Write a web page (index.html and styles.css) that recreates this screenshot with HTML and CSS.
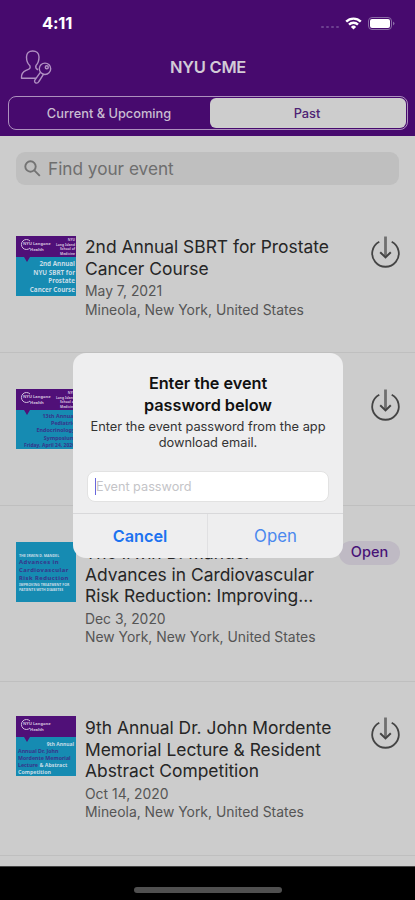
FILE: index.html
```html
<!DOCTYPE html>
<html lang="en">
<head>
<meta charset="utf-8">
<title>NYU CME</title>
<link rel="stylesheet" href="styles.css">
</head>
<body>
<svg class="defs" width="0" height="0">
  <symbol id="download" viewBox="0 0 32 34">
    <path d="M10.300 5.700A13.300 13.300 0 1 0 22.700 5.700" fill="none" stroke="#444" stroke-width="1.800"/>
    <path d="M16.500 .5v20" fill="none" stroke="#707070" stroke-width="2.800"/>
    <path d="M11.200 16.200l5.300 5.200 5.300-5.200" fill="none" stroke="#444" stroke-width="2"/>
  </symbol>
  <symbol id="crest" viewBox="0 0 30 14">
    <path d="M11 3A5 5 0 1 0 11 10" fill="none" stroke="currentColor" stroke-width="1"/>
  </symbol>
</svg>
<div class="phone">
  <header class="top">
    <div class="status">
      <span class="time">4:11</span>
      <span class="signals">
        <span class="dots"><i></i><i></i><i></i><i></i></span>
        <svg width="17" height="13" viewBox="0 0 17 13" fill="none" stroke="#fff" stroke-width="2.4"><path d="M1.2 4.7a10.3 10.3 0 0 1 14.6 0M4 7.6a6.4 6.4 0 0 1 9 0"/><path d="M8.5 12.5L5.9 9.9a3.7 3.7 0 0 1 5.2 0z" fill="#fff" stroke="none"/></svg>
        <svg width="27" height="13" viewBox="0 0 27 13"><rect x=".5" y=".5" width="23" height="12" rx="3.5" fill="none" stroke="#8a6ba6"/><rect x="2" y="2" width="20" height="9" rx="2" fill="#fff"/><path d="M25 4.5q3 2 0 4z" fill="#8a6ba6"/></svg>
      </span>
    </div>
    <div class="nav">
      <svg class="user" width="33" height="34" viewBox="0 0 33 34" fill="none" stroke="#b08fc2" stroke-width="1.4" stroke-linejoin="round"><path d="M16 28.200H1.500c-.6-4.700 1.500-6.500 5-8 3-1.300 4.300-1.800 3.400-4.500C7.300 13.500 6.500 10 6.500 7c0-3.800 2.500-6 6.200-6s6.300 2.300 6.300 6c0 3.300-.8 6.200-3 8.500-.8 2 .1 3.300 2 4.300"/><circle cx="25" cy="18.800" r="5.700"/><circle cx="26.800" cy="17.200" r="1.500"/><path d="M20.500 22.200l-5.700 8c-.7 1.300.2 2.800 1.700 2.900 1.300.1 1.900-.7 2.400-1.600l4.700-7.400"/></svg>
      <h1>NYU CME</h1>
    </div>
    <div class="segments"><span class="seg">Current &amp; Upcoming</span><span class="seg on">Past</span></div>
  </header>
  <main>
    <div class="search">
      <svg width="17" height="17" viewBox="0 0 17 17" fill="none" stroke="#737373" stroke-width="1.900"><circle cx="6.500" cy="6.500" r="5.200"/><path d="M10.300 10.300l5.500 5.500"/></svg>
      <span>Find your event</span>
    </div>
    <article class="row">
      <div class="thumb">
        <div class="brand"><svg class="crest"><use href="#crest"/></svg><b>NYU Langone<br>Health</b><em>NYU<br>Long Island<br>School of<br>Medicine</em></div>
        <p class="art first">2nd Annual<br>NYU SBRT for<br>Prostate<br>Cancer Course</p>
      </div>
      <div class="info"><h2>2nd Annual SBRT for Prostate<br>Cancer Course</h2><p>May 7, 2021</p><p>Mineola, New York, United States</p></div>
      <svg class="dl"><use href="#download"/></svg>
    </article>
    <article class="row">
      <div class="thumb">
        <div class="brand"><svg class="crest"><use href="#crest"/></svg><b>NYU Langone<br>Health</b><em>NYU<br>Long Island<br>School of<br>Medicine</em></div>
        <p class="art second">13th Annual<br>Pediatric<br>Endocrinology<br>Symposium<small>Friday, April 24, 2020</small></p>
      </div>
      <div class="info"></div>
      <svg class="dl"><use href="#download"/></svg>
    </article>
    <article class="row tall">
      <div class="thumb cardio">
        <small>THE IRWIN D. MANDEL</small><strong>Advances in<br>Cardiovascular<br>Risk Reduction</strong><small class="sub">IMPROVING TREATMENT FOR<br>PATIENTS WITH DIABETES</small>
      </div>
      <div class="info"><h2>The Irwin D. Mander<br>Advances in Cardiovascular<br>Risk Reduction: Improving...</h2><p>Dec 3, 2020</p><p>New York, New York, United States</p></div>
      <span class="pill">Open</span>
    </article>
    <article class="row last">
      <div class="thumb">
        <div class="brand"><svg class="crest"><use href="#crest"/></svg><b>NYU Langone<br>Health</b></div>
        <p class="art fourth"><span>9th Annual</span>Annual Dr. John<br>Mordente Memorial<br>Lecture <i>&amp; Abstract<br>Competition</i></p>
      </div>
      <div class="info"><h2>9th Annual Dr. John Mordente<br>Memorial Lecture &amp; Resident<br>Abstract Competition</h2><p>Oct 14, 2020</p><p>Mineola, New York, United States</p></div>
      <svg class="dl"><use href="#download"/></svg>
    </article>
  </main>
  <footer><span class="home"></span></footer>
  <section class="dialog" role="dialog">
    <div class="message">
      <h3>Enter the event<br>password below</h3>
      <p>Enter the event password from the app<br>download email.</p>
      <div class="field"><span class="caret"></span><span>Event password</span></div>
    </div>
    <div class="actions"><span class="cancel">Cancel</span><span>Open</span></div>
  </section>
</div>
</body>
</html>
```

FILE: styles.css
```css
* { box-sizing: border-box; }
body, h1, h2, h3, p { margin: 0; }
body { font-family: Inter, "Liberation Sans", sans-serif; background: #000; }
.defs { position: absolute; }
.phone { position: relative; width: 415px; height: 900px; overflow: hidden; display: flex; flex-direction: column; background: #cccccc; }
.top { height: 136px; flex: none; background: #470a6e; display: flex; flex-direction: column; }
.status { height: 46px; display: flex; justify-content: space-between; padding: 0 20px 0 42px; align-items: center; }
.time { font-size: 16.5px; font-weight: 700; color: #fff; letter-spacing: -.2px; }
.signals { display: flex; align-items: center; gap: 6px; }
.signals svg { display: block; }
.dots { display: flex; gap: 2px; padding-top: 8px; }
.dots i { width: 3px; height: 2px; border-radius: 1px; background: #6d4190; }
.nav { height: 50px; display: grid; grid-template-columns: 70px 1fr 69px; align-items: start; text-align: center; }
.user { margin: 4px 0 0 20px; }
h1 { font-size: 16.5px; line-height: 22px; margin-top: 10px; font-weight: 600; color: #d2cbd6; letter-spacing: -.25px; }
.segments { height: 34px; margin: 0 7px 0 8px; border: 1.5px solid #ad91be; border-radius: 8px; display: flex; padding: 1px; }
.seg { flex: 0 0 200px; display: flex; align-items: center; justify-content: center; font-size: 12.8px; font-weight: 500; color: #c9bdd1; padding-right: 2px; }
.seg.on { flex: 1; background: #cdcdcd; color: #4e2274; border-radius: 6px; }
main { height: 730px; flex: none; padding-top: 16px; overflow: hidden; }
.search { height: 33px; margin: 0 16px 15px; padding: 0 8px; display: flex; align-items: center; gap: 7px; border-radius: 9px; background: #bfbfbf; color: #6e6e6e; font-size: 17.2px; }
.row { height: 153px; padding: 36px 14px 0 16px; display: flex; border-bottom: 1px solid #bfbfbf; }
.row.tall { height: 176px; }
.row.last { height: 174px; padding-top: 35px; }
.info { flex: 1; margin-left: 9px; white-space: nowrap; }
h2 { font-size: 17.4px; line-height: 21.5px; font-weight: 400; color: #262626; margin-bottom: 3px; }
.info p { font-size: 13.9px; line-height: 18.5px; color: #555; }
.dl { width: 32px; height: 34px; }
.pill { width: 61px; height: 24px; border-radius: 12px; background: #bfbac4; color: #471277; font-size: 14.5px; font-weight: 500; line-height: 22px; text-align: center; margin: -1px 1px 0 -5px; }
.thumb { width: 60px; height: 60px; flex: none; overflow: hidden; background: #168bb2; color: #c6dce7; font-family: "Noto Sans", sans-serif; }
.last .thumb { margin-top: -1px; }
.brand { position: relative; height: 21px; background: #501078; display: flex; justify-content: space-between; padding: 2px 1px 0 7px; color: #d2bfdd; }
.brand::after { content: ""; position: absolute; left: 8px; top: 21px; border: solid transparent; border-width: 5px 3px 0; border-top-color: #501078; }
.crest { position: absolute; left: 3px; top: 2px; width: 30px; height: 14px; }
.brand b { font-size: 4.1px; line-height: 5.6px; padding-top: 3px; text-align: center; white-space: nowrap; }
.brand em { font: bold 3.3px/4.6px "Noto Sans", sans-serif; text-align: right; white-space: nowrap; }
.art { font-size: 6.3px; line-height: 8.7px; font-weight: 700; white-space: nowrap; }
.first { text-align: right; padding: 3px 1px 0 0; }
.second { text-align: right; padding: 3px 1px 0 0; color: #37358b; font-size: 5.4px; line-height: 7.2px; }
.second small { display: block; font-size: 5px; line-height: 7px; }
.fourth { color: #37358b; padding: 4px 2px 0; line-height: 7.1px; font-size: 5.3px; }
.fourth span { display: block; text-align: right; color: #c6dce7; font-size: 5px; }
.fourth i { font-style: normal; color: #c6dce7; }
.cardio { padding: 11px 3px 0; white-space: nowrap; }
.cardio small { display: block; font-size: 3.6px; line-height: 5px; font-weight: 700; }
.cardio strong { display: block; color: #37358b; font-size: 5.9px; line-height: 8px; letter-spacing: .45px; }
.cardio .sub { font-size: 3.5px; }
footer { flex: 1; background: #000; display: flex; justify-content: center; padding-top: 20px; border-top: 1px solid #444; }
.home { width: 148px; height: 6px; border-radius: 3px; background: #505050; }
.dialog { position: absolute; left: 73px; top: 353px; width: 270px; height: 205px; border-radius: 13px; background: #eeeeef; overflow: hidden; text-align: center; display: flex; flex-direction: column; }
.message { height: 162px; padding: 19px 14px 0; }
h3 { font-size: 16.3px; line-height: 22px; font-weight: 600; color: #111; letter-spacing: -.05px; }
.message p { font-size: 12.8px; line-height: 16px; margin: 3px -10px 0; color: #333; white-space: nowrap; }
.field { height: 31px; margin-top: 20px; background: #fff; border: 1px solid #e2e2e2; border-radius: 8px; display: flex; align-items: center; padding-left: 7px; font-size: 12.7px; color: #c4c4c8; }
.caret { width: 1px; height: 17px; flex: none; background: #6866dd; }
.actions { flex: 1; border-top: 1px solid #d8d8da; display: grid; grid-template-columns: 1fr 1fr; font-size: 16.8px; line-height: 44px; color: #4a88ee; }
.cancel { font-weight: 600; font-size: 16.3px; color: #1c72f0; border-right: 1px solid #e0e0e2; }
```
